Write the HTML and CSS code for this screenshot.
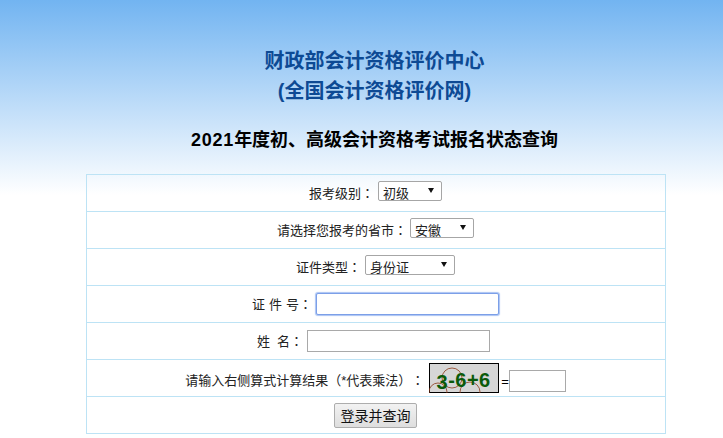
FILE: index.html
```html
<!DOCTYPE html>
<html lang="zh-CN">
<head>
    <meta charset="UTF-8">
    <title>报名状态查询</title>
    <link rel="stylesheet" href="styles.css">
</head>
<body>
    <div class="container">
        <h1>财政部会计资格评价中心<br>(全国会计资格评价网)</h1>
        <h2><span class="year">2021</span>年度初、高级会计资格考试报名状态查询</h2>
        <form class="query-form">
            <div class="row">
                <label>报考级别<span class="punct">：</span></label>
                <select class="sel-level"><option>初级</option></select>
            </div>
            <div class="row">
                <label>请选择您报考的省市<span class="punct">：</span></label>
                <select class="sel-province"><option>安徽</option></select>
            </div>
            <div class="row">
                <label>证件类型<span class="punct">：</span></label>
                <select class="sel-type"><option>身份证</option></select>
            </div>
            <div class="row">
                <label class="label-id">证 件 号<span class="punct">：</span></label>
                <input type="text" class="txt txt-focus">
            </div>
            <div class="row row-name">
                <label>姓&nbsp;&nbsp;名<span class="punct">：</span></label>
                <input type="text" class="txt">
            </div>
            <div class="row">
                <label class="label-code">请输入右侧算式计算结果<span class="punct">（</span>*代表乘法<span class="punct">）：</span></label>
                <svg class="captcha" width="70" height="30" viewBox="0 0 70 30">
                    <rect x="0.5" y="0.5" width="69" height="29" fill="#d6d6d6" stroke="#000"/>
                    <g fill="none" stroke="#8b3a1a" stroke-width="0.8">
                        <circle cx="9" cy="29" r="9"/>
                        <circle cx="23" cy="15" r="10"/>
                        <circle cx="41" cy="29" r="10"/>
                    </g>
                    <text class="captcha-text" x="7.5" y="24"><tspan dy="2">3</tspan><tspan dy="-2">-6+6</tspan></text>
                </svg>
                <span class="eq">=</span><input type="text" class="txt txt-code">
            </div>
            <div class="row">
                <button type="button" class="btn">登录并查询</button>
            </div>
        </form>
    </div>
</body>
</html>
```

FILE: styles.css
```css
* {
    box-sizing: border-box;
}

html, body {
    margin: 0;
    padding: 0;
}

body {
    min-height: 100vh;
    overflow: hidden;
    background: #fff linear-gradient(to bottom, #72b4f1 0, #fff 195px) no-repeat;
    font-family: "Liberation Sans", "Noto Sans CJK SC", sans-serif;
    font-size: 13px;
    color: #222;
    text-spacing-trim: space-all;
}

.container {
    width: 752px;
    padding-top: 46px;
}

h1 {
    margin: 0;
    padding-right: 3px;
    text-align: center;
    font-size: 20px;
    line-height: 30px;
    font-weight: bold;
    color: #0d4a94;
}

h2 {
    margin: 19px 0 0;
    padding-right: 3px;
    text-align: center;
    font-size: 18px;
    line-height: 30px;
    font-weight: bold;
    color: #000;
}

.year {
    letter-spacing: 0.8px;
}

.query-form {
    width: 580px;
    margin: 19px auto 0;
    border: 1px solid #bde3f5;
    border-bottom: 0;
}

.row {
    display: flex;
    justify-content: center;
    align-items: center;
    height: 37px;
    padding-right: 1px;
    border-bottom: 1px solid #bde3f5;
}

label {
    margin-bottom: 2px;
}

.punct {
    font-family: "Noto Sans CJK TC", sans-serif;
    font-feature-settings: "locl" 0;
}

.label-id {
    word-spacing: 0.5px;
}

.label-code {
    margin: 3px 0 0;
}

select {
    appearance: none;
    height: 20px;
    margin: 0 0 4px 4px;
    padding: 4px 0 0 4px;
    border: 1px solid #a6a6a6;
    border-radius: 2px;
    background: #fff url("data:image/svg+xml,%3Csvg xmlns='http://www.w3.org/2000/svg' width='6' height='5'%3E%3Cpath d='M0 0h6L3 5z' fill='%23111'/%3E%3C/svg%3E") no-repeat right 7px top 6px;
    font-family: inherit;
    font-size: 13px;
    color: #222;
}

.sel-level { width: 64px; }
.sel-province { width: 64px; margin-left: 3px; }
.sel-type { width: 90px; }

.txt {
    height: 22px;
    margin-left: 4px;
    width: 183px;
    border: 1px solid #a9a9a9;
    background: #fff;
    padding: 0 2px;
}

.row-name .txt {
    margin-right: 4px;
}

.txt-focus {
    border: 1px solid #7c9fe8;
    border-radius: 2px;
    box-shadow: 0 0 1px 1px #a9c3f3;
}

.txt-code {
    width: 57px;
    margin: 6px 0 0;
}

.captcha {
    margin-left: 5px;
}

.captcha-text {
    font-family: "Liberation Sans", sans-serif;
    font-size: 20px;
    font-weight: bold;
    letter-spacing: 0.5px;
    fill: #0a5a0a;
}

.eq {
    margin: 6px 0 0 2px;
    color: #000;
}

.btn {
    width: 83px;
    height: 25px;
    padding: 0;
    border: 1px solid #adadad;
    border-radius: 2px;
    background: linear-gradient(to bottom, #f2f2f2, #dedede);
    font-family: inherit;
    font-size: 14px;
    color: #111;
}
```
